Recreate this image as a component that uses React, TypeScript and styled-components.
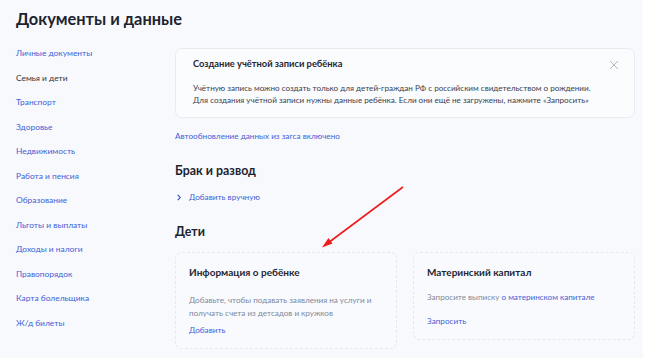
import styled, { createGlobalStyle } from 'styled-components';

const GlobalStyle = createGlobalStyle`
    html, body {
        margin: 0;
        padding: 0;
        background: #ffffff;
    }
    body {
        font-family: Lato, 'Noto Sans', sans-serif;
        color: #1f2633;
    }
`

const Page = styled.div`
    position: relative;
    width: 643px;
    height: 358px;
    background: #f8f9fd;
    overflow: hidden;
`

const Title = styled.h1`
    margin: 0;
    padding: 8px 0 0 16px;
    font-size: 16.4px;
    line-height: 21px;
    font-weight: 700;
    color: #1d2430;
    height: 30px;
`

const Body = styled.div`
    display: grid;
    grid-template-columns: 175px 460px;
`

const Sidebar = styled.nav`
    display: flex;
    flex-direction: column;
    padding: 3px 0 0 16px;
`

const SideItem = styled.a<{ $active?: boolean }>`
    font-size: 8.4px;
    line-height: 24.5px;
    color: ${({ $active }) => ($active ? '#2b3240' : '#3e62d6')};
    text-decoration: none;
`

const Main = styled.main`
    display: flex;
    flex-direction: column;
    padding-top: 10px;
`

const InfoBox = styled.section`
    position: relative;
    box-sizing: border-box;
    height: 70px;
    padding: 8px 17px 0 17px;
    background: #fbfcfe;
    border: 1px solid #e8ebf1;
    border-radius: 7px;
`

const BoxTitle = styled.div`
    font-size: 9.3px;
    line-height: 14px;
    font-weight: 700;
    color: #1f2633;
`

const BoxText = styled.p`
    margin: 11px 0 0;
    font-size: 8.1px;
    line-height: 12px;
    color: #3a4150;
`

const Close = styled.svg`
    position: absolute;
    top: 11px;
    right: 15px;
`

const Link = styled.a<{ $mt?: number }>`
    display: block;
    margin-top: ${({ $mt }) => $mt ?? 0}px;
    font-size: 8.2px;
    line-height: 12px;
    color: #3e62d6;
    text-decoration: none;
`

const SectionTitle = styled.h2<{ $mt: number }>`
    margin: ${({ $mt }) => $mt}px 0 0;
    font-size: 12.4px;
    line-height: 18px;
    font-weight: 700;
    color: #1d2430;
`

const AddRow = styled.div`
    display: flex;
    align-items: center;
    gap: 8px;
    margin-top: 11px;
    padding-left: 2px;
    font-size: 8.2px;
    line-height: 12px;
    color: #3e62d6;
`

const Cards = styled.div`
    display: grid;
    grid-template-columns: 222px 222px;
    gap: 16px;
    align-items: start;
    margin-top: 11px;
`

const Card = styled.div`
    box-sizing: border-box;
    padding: 12px 13px 12px 13px;
    border: 1px dashed #e3e8f5;
    border-radius: 7px;
    background: #f9fafe;
`

const CardTitle = styled.div`
    font-size: 10px;
    line-height: 14px;
    font-weight: 700;
    color: #1f2633;
`

const CardText = styled.p<{ $mt: number }>`
    margin: ${({ $mt }) => $mt}px 0 0;
    font-size: 8.1px;
    line-height: 13px;
    color: #80889a;
`

const Blue = styled.span`
    color: #3e62d6;
`

const Arrow = styled.svg`
    position: absolute;
    left: 318px;
    top: 183px;
    pointer-events: none;
`

const navItems = [
    'Личные документы',
    'Семья и дети',
    'Транспорт',
    'Здоровье',
    'Недвижимость',
    'Работа и пенсия',
    'Образование',
    'Льготы и выплаты',
    'Доходы и налоги',
    'Правопорядок',
    'Карта болельщика',
    'Ж/д билеты',
]

export default function App() {
    return (
        <>
            <GlobalStyle />
            <Page>
                <Title>Документы и данные</Title>
                <Body>
                    <Sidebar>
                        {navItems.map((item) => (
                            <SideItem key={item} $active={item === 'Семья и дети'}>{item}</SideItem>
                        ))}
                    </Sidebar>
                    <Main>
                        <InfoBox>
                            <BoxTitle>Создание учётной записи ребёнка</BoxTitle>
                            <BoxText>
                                Учётную запись можно создать только для детей-граждан РФ с российским свидетельством о рождении.
                                <br />
                                Для создания учётной записи нужны данные ребёнка. Если они ещё не загружены, нажмите «Запросить»
                            </BoxText>
                            <Close width="10" height="10" viewBox="0 0 10 10">
                                <path d="M1 1L9 9M9 1L1 9" stroke="#b5b9c2" strokeWidth="1" fill="none" />
                            </Close>
                        </InfoBox>
                        <Link $mt={12}>Автообновление данных из загса включено</Link>

                        <SectionTitle $mt={20}>Брак и развод</SectionTitle>
                        <AddRow>
                            <svg width="4" height="7" viewBox="0 0 4 7">
                                <path d="M0.7 0.8L3.2 3.5L0.7 6.2" stroke="#2c4bb8" strokeWidth="1.1" fill="none" />
                            </svg>
                            Добавить вручную
                        </AddRow>

                        <SectionTitle $mt={20}>Дети</SectionTitle>
                        <Cards>
                            <Card>
                                <CardTitle>Информация о ребёнке</CardTitle>
                                <CardText $mt={15}>
                                    Добавьте, чтобы подавать заявления на услуги и
                                    <br />
                                    получать счета из детсадов и кружков
                                </CardText>
                                <Link $mt={4}>Добавить</Link>
                            </Card>
                            <Card>
                                <CardTitle>Материнский капитал</CardTitle>
                                <CardText $mt={12}>
                                    Запросите выписку <Blue>о материнском капитале</Blue>
                                </CardText>
                                <Link $mt={11}>Запросить</Link>
                            </Card>
                        </Cards>
                    </Main>
                </Body>
                <Arrow width="90" height="68" viewBox="0 0 90 68">
                    <line x1="85" y1="4" x2="10" y2="60" stroke="#ee1c1c" strokeWidth="1.6" />
                    <polygon points="4,64.5 10.5,55 14.5,60.5" fill="#ee1c1c" />
                </Arrow>
            </Page>
        </>
    )
}
